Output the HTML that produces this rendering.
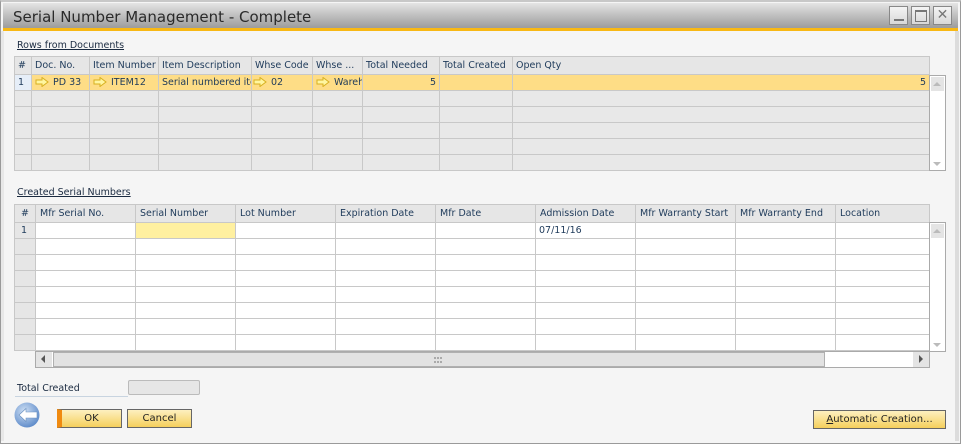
<!DOCTYPE html>
<html><head><meta charset="utf-8"><style>
*{box-sizing:border-box;margin:0;padding:0}
body{width:961px;height:444px;background:#f5f5f5;font-family:"DejaVu Sans","Liberation Sans",sans-serif;font-size:10px;color:#1e3a5a;position:relative;overflow:hidden}
.abs{position:absolute}
#frame{left:0;top:0;width:961px;height:444px;border:1px solid #9a9a9a;border-top:2px solid #c8c8c8;background:#f5f5f5}
#title{left:3px;top:3px;width:955px;height:25px;background:linear-gradient(#e4e4e4,#b8b8b8 60%,#9c9c9c);font-size:15px;color:#2a2a2a;padding:5px 0 0 10px;font-family:"DejaVu Sans",sans-serif}
#ybar{left:3px;top:28px;width:955px;height:3px;background:#f8b814}
#rstrip{left:955px;top:31px;width:4px;height:410px;background:#dcdcdc}
#lstrip{left:1px;top:31px;width:3px;height:410px;background:#e8e8e8}
.wb{top:6px;width:19px;height:19px;border:1px solid #888;background:linear-gradient(#f4f4f4,#d8d8d8)}
.lbl{font-size:9.5px;text-decoration:underline;color:#1a2a40}
table{border-collapse:collapse;table-layout:fixed;position:absolute}
td{border:1px solid #c8c8c8;height:16px;padding:0 3px;white-space:nowrap;overflow:hidden;font-size:9.5px;color:#1e3a5a}
tr.h td{background:#e6e6e6;height:18px}
td.n{background:#e6e6e6}
.sel td{background:#fedd86}
.g1 td{background:#e8e8e8}
.g1 tr.sel td{background:#fedd86}
.g2 td{background:#fff}
.g2 tr.h td,.g2 td.n{background:#e6e6e6}
.ar{display:inline-block;vertical-align:-2px;margin-right:4px}
.vs{border:1px solid #aaa;background:#fff}
.btn{height:19px;border:1px solid #666;background:linear-gradient(#fdf0c0,#f5cf5c);text-align:center;font-size:10px;color:#222;padding-top:3px}
</style></head><body>
<div id="frame" class="abs"></div>
<div id="lstrip" class="abs"></div>
<div id="rstrip" class="abs"></div>
<div id="title" class="abs">Serial Number Management - Complete</div>
<div id="ybar" class="abs"></div>
<div class="abs wb" style="left:889px"><div class="abs" style="left:4px;top:12px;width:10px;height:2px;background:#777"></div></div>
<div class="abs wb" style="left:911px"><div class="abs" style="left:3px;top:3px;width:12px;height:12px;border:1px solid #777;border-top-width:2px"></div></div>
<div class="abs wb" style="left:933px;font-size:14px;font-weight:bold;color:#777;text-align:center;line-height:17px">✕</div>

<div class="abs lbl" style="left:17px;top:40px">Rows from Documents</div>
<svg width="0" height="0" style="position:absolute"><defs><symbol id="arw" viewBox="0 0 14 10"><path d="M1 3h6V0.5L13 5 7 9.5V7H1z" fill="#fff6a0" stroke="#d8b020" stroke-width="1"/></symbol></defs></svg>
<table class="g1" style="left:14px;top:56px;width:916px">
<col style="width:17px"><col style="width:58px"><col style="width:69px"><col style="width:93px"><col style="width:61px"><col style="width:50px"><col style="width:77px"><col style="width:73px"><col>
<tr class="h"><td>#</td><td>Doc. No.</td><td>Item Number</td><td>Item Description</td><td>Whse Code</td><td>Whse ...</td><td>Total Needed</td><td>Total Created</td><td>Open Qty</td></tr>
<tr class="sel"><td style="background:#e6eef8">1</td><td><svg class="ar" width="14" height="10"><use href="#arw"/></svg>PD 33</td><td><svg class="ar" width="14" height="10"><use href="#arw"/></svg>ITEM12</td><td>Serial numbered item</td><td style="padding-left:1px"><svg class="ar" width="14" height="10"><use href="#arw"/></svg>02</td><td><svg class="ar" width="14" height="10"><use href="#arw"/></svg>Warehouse</td><td style="text-align:right">5</td><td></td><td style="text-align:right">5</td></tr>
<tr><td class="n"></td><td></td><td></td><td></td><td></td><td></td><td></td><td></td><td></td></tr>
<tr><td class="n"></td><td></td><td></td><td></td><td></td><td></td><td></td><td></td><td></td></tr>
<tr><td class="n"></td><td></td><td></td><td></td><td></td><td></td><td></td><td></td><td></td></tr>
<tr><td class="n"></td><td></td><td></td><td></td><td></td><td></td><td></td><td></td><td></td></tr>
<tr><td class="n"></td><td></td><td></td><td></td><td></td><td></td><td></td><td></td><td></td></tr>
</table>
<div class="abs vs" style="left:929px;top:75px;width:17px;height:96px">
<div class="abs" style="left:1px;top:1px;width:13px;height:14px;background:#e4e4e4"></div>
<div class="abs" style="left:3px;top:6px;border:4px solid transparent;border-bottom:4px solid #bbb;border-top:0"></div>
<div class="abs" style="left:3px;top:86px;border:4px solid transparent;border-top:4px solid #bbb;border-bottom:0"></div>
</div>

<div class="abs lbl" style="left:17px;top:187px">Created Serial Numbers</div>
<table class="g2" style="left:14px;top:204px;width:916px">
<col style="width:21px"><col style="width:100px"><col style="width:100px"><col style="width:100px"><col style="width:100px"><col style="width:100px"><col style="width:100px"><col style="width:100px"><col style="width:100px"><col>
<tr class="h"><td style="padding-left:6px">#</td><td style="padding-left:4px">Mfr Serial No.</td><td style="padding-left:4px">Serial Number</td><td style="padding-left:4px">Lot Number</td><td style="padding-left:4px">Expiration Date</td><td style="padding-left:4px">Mfr Date</td><td style="padding-left:4px">Admission Date</td><td style="padding-left:4px">Mfr Warranty Start</td><td style="padding-left:4px">Mfr Warranty End</td><td style="padding-left:4px">Location</td></tr>
<tr><td class="n" style="padding-left:6px">1</td><td></td><td style="background:#fff0a0"></td><td></td><td></td><td></td><td>07/11/16</td><td></td><td></td><td></td></tr>
<tr><td class="n"></td><td></td><td></td><td></td><td></td><td></td><td></td><td></td><td></td><td></td></tr>
<tr><td class="n"></td><td></td><td></td><td></td><td></td><td></td><td></td><td></td><td></td><td></td></tr>
<tr><td class="n"></td><td></td><td></td><td></td><td></td><td></td><td></td><td></td><td></td><td></td></tr>
<tr><td class="n"></td><td></td><td></td><td></td><td></td><td></td><td></td><td></td><td></td><td></td></tr>
<tr><td class="n"></td><td></td><td></td><td></td><td></td><td></td><td></td><td></td><td></td><td></td></tr>
<tr><td class="n"></td><td></td><td></td><td></td><td></td><td></td><td></td><td></td><td></td><td></td></tr>
<tr><td class="n"></td><td></td><td></td><td></td><td></td><td></td><td></td><td></td><td></td><td></td></tr>
</table>
<div class="abs vs" style="left:929px;top:222px;width:17px;height:130px">
<div class="abs" style="left:1px;top:1px;width:13px;height:14px;background:#e4e4e4"></div>
<div class="abs" style="left:3px;top:6px;border:4px solid transparent;border-bottom:4px solid #bbb;border-top:0"></div>
<div class="abs" style="left:3px;top:120px;border:4px solid transparent;border-top:4px solid #bbb;border-bottom:0"></div>
</div>
<div class="abs vs" style="left:35px;top:351px;width:895px;height:17px">
<div class="abs" style="left:0;top:0;width:16px;height:15px;background:#e4e4e4"></div>
<div class="abs" style="left:5px;top:3px;border:4px solid transparent;border-right:4px solid #555;border-left:0;height:0"></div>
<div class="abs" style="left:17px;top:0;width:772px;height:15px;background:#e2e2e2;border:1px solid #b0b0b0"></div>
<div class="abs" style="left:398px;top:5px;width:8px;height:6px;border-top:2px dotted #aaa;border-bottom:2px dotted #aaa"></div>
<div class="abs" style="left:877px;top:0;width:16px;height:15px;background:#e4e4e4"></div>
<div class="abs" style="left:883px;top:3px;border:4px solid transparent;border-left:4px solid #555;border-right:0;height:0"></div>
</div>

<div class="abs" style="left:15px;top:383px;width:113px;height:14px;border-bottom:1px solid #c8d4e0;font-size:9.5px;color:#1a2a40;padding-left:2px">Total Created</div>
<div class="abs" style="left:128px;top:380px;width:72px;height:15px;background:#e6e6e6;border:1px solid #bbb;border-radius:2px"></div>

<svg class="abs" style="left:14px;top:402px" width="28" height="26" viewBox="0 0 28 26">
<defs><radialGradient id="bg" cx="40%" cy="35%" r="70%"><stop offset="0" stop-color="#cfe0f4"/><stop offset="1" stop-color="#5a88c8"/></radialGradient></defs>
<circle cx="13" cy="13" r="12.5" fill="url(#bg)"/>
<path d="M5 13 L12 6.5 V10 H23 V16 H12 V19.5 Z" fill="#fff" stroke="#6a90c0" stroke-width="0.6"/>
</svg>
<div class="abs btn" style="left:57px;top:409px;width:65px;border-left:5px solid #f08a10;padding-left:0">OK</div>
<div class="abs btn" style="left:127px;top:409px;width:65px">Cancel</div>
<div class="abs btn" style="left:813px;top:410px;width:133px"><u>A</u>utomatic Creation...</div>
</body></html>
